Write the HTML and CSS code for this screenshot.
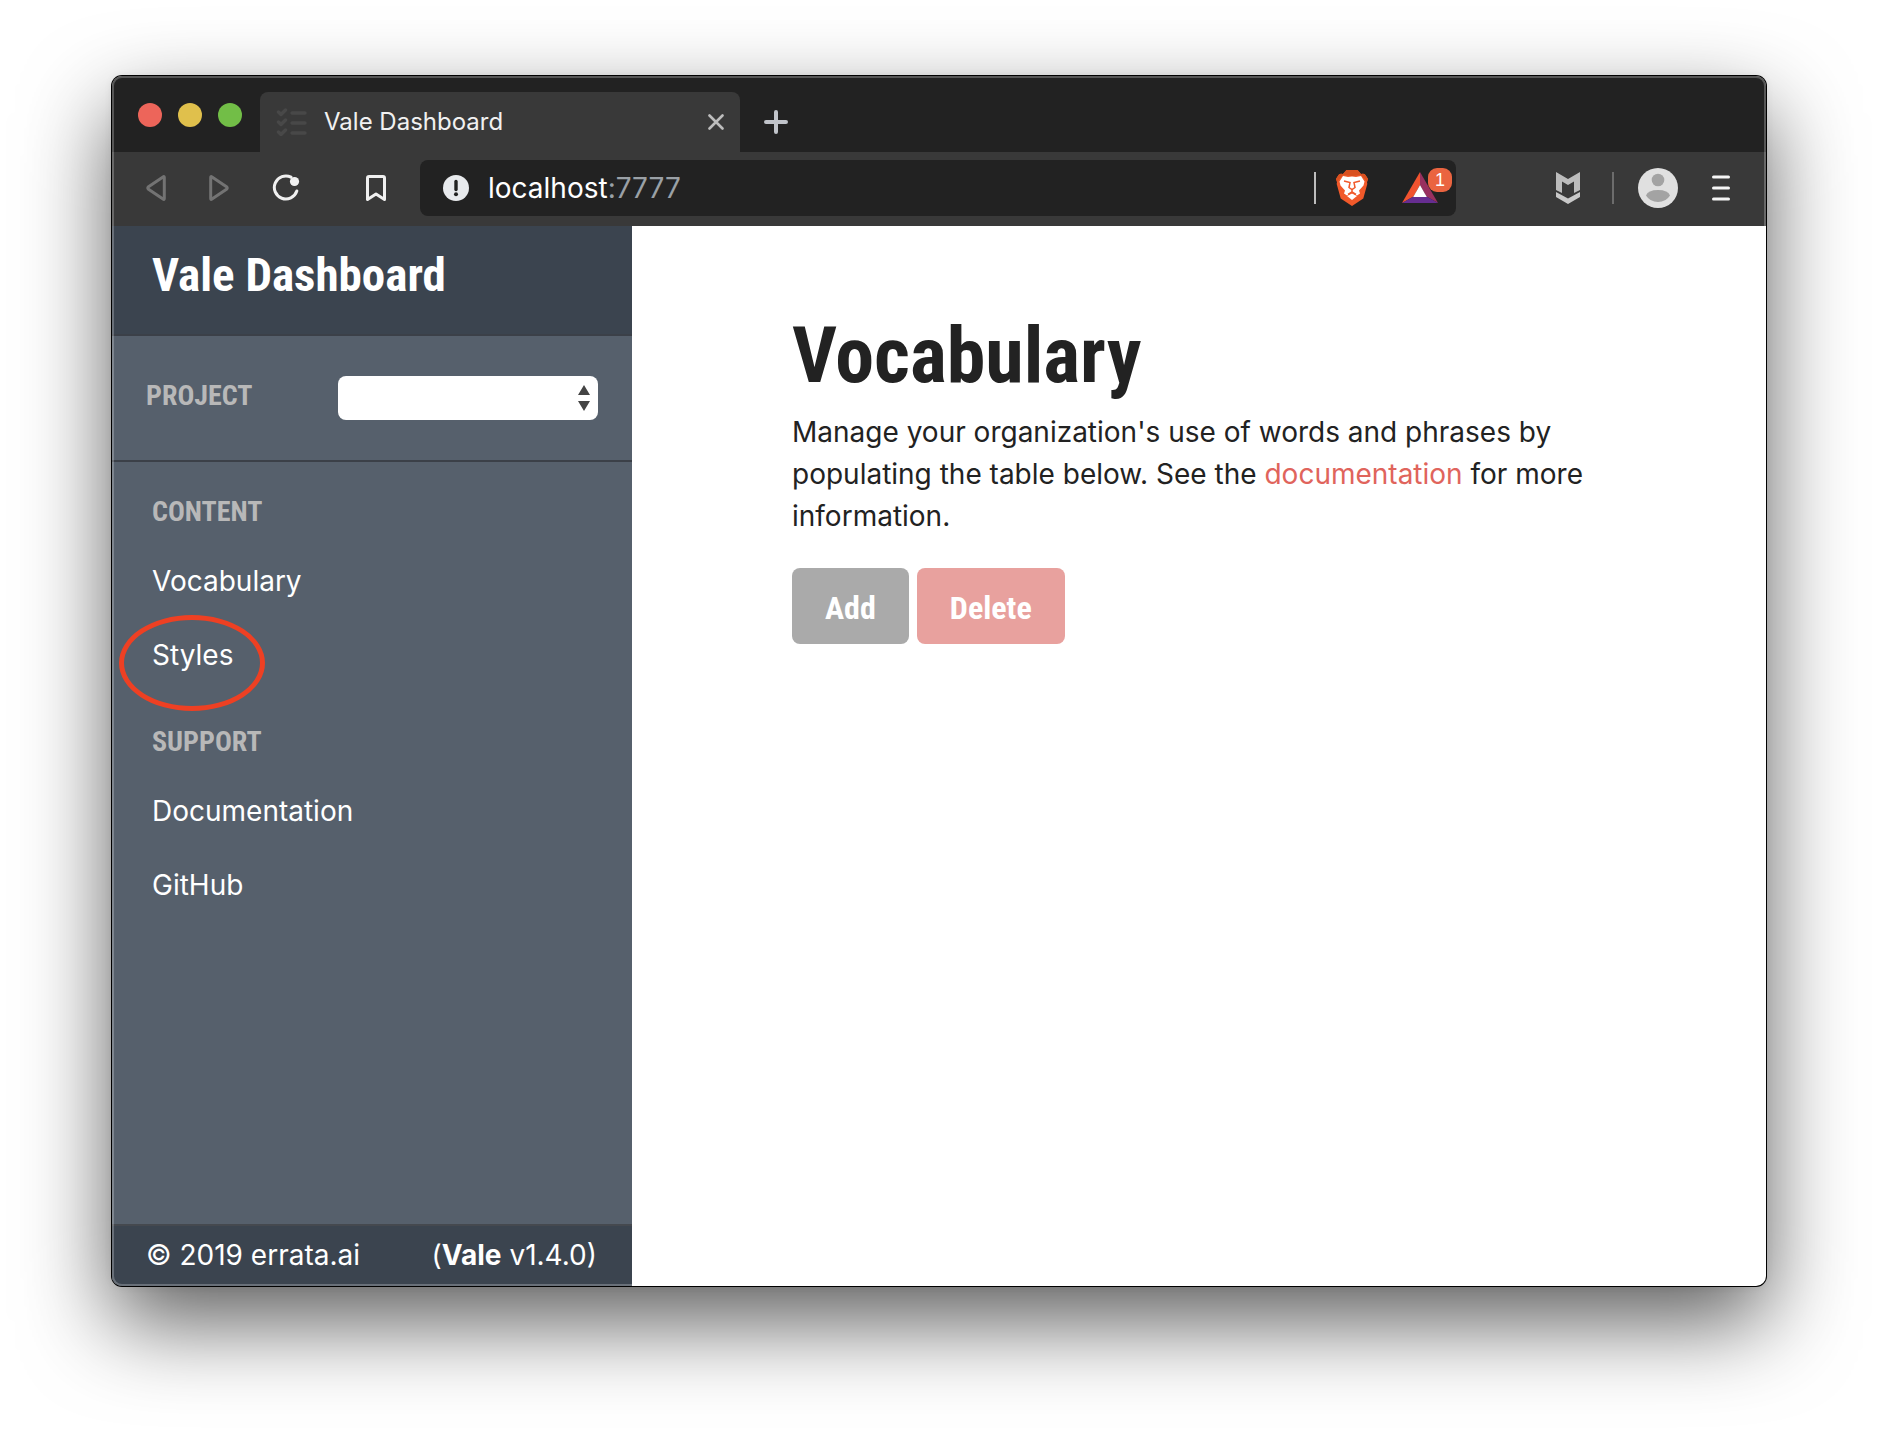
FILE: index.html
```html
<!DOCTYPE html>
<html lang="en">
<head>
<meta charset="utf-8">
<title>Vale Dashboard</title>
<link rel="stylesheet" href="styles.css">
</head>
<body>
<div class="window">
  <div class="tab-strip">
    <div class="lights">
      <span class="light light-close"></span>
      <span class="light light-minimize"></span>
      <span class="light light-zoom"></span>
    </div>
    <div class="tab">
      <svg class="favicon" width="32" height="28" viewBox="0 0 32 28" fill="none" stroke="#484848" stroke-width="3.400" stroke-linecap="round" stroke-linejoin="round">
        <path d="M2.500 4l2.500 2.500 4.500-4.500M2.500 14l2.500 2.500 4.500-4.500M2.500 24l2.500 2.500 4.500-4.500M16 5h13M16 15h13M16 25h13"/>
      </svg>
      <span class="tab-title">Vale Dashboard</span>
      <button class="icon-button" aria-label="Close tab">
        <svg width="16" height="16" viewBox="0 0 16 16" fill="none" stroke="#bdbdbd" stroke-width="2.600" stroke-linecap="round"><path d="M1.500 1.500l13 13M14.500 1.500l-13 13"/></svg>
      </button>
    </div>
    <button class="icon-button new-tab" aria-label="New tab">
      <svg width="24" height="24" viewBox="0 0 24 24" fill="none" stroke="#c1c4ca" stroke-width="4" stroke-linecap="round"><path d="M12 2v20M2 12h20"/></svg>
    </button>
  </div>

  <div class="toolbar">
    <div class="nav-buttons">
      <button class="icon-button" aria-label="Back">
        <svg width="20" height="26" viewBox="0 0 20 26" fill="none" stroke="#737373" stroke-width="3" stroke-linejoin="round"><path d="M18.300 2.500v21q0 1.500-1.300.6L2.500 14.300q-1.500-1.300 0-2.600L17 1.900q1.300-.9 1.300.6z"/></svg>
      </button>
      <button class="icon-button" aria-label="Forward">
        <svg width="20" height="26" viewBox="0 0 20 26" fill="none" stroke="#737373" stroke-width="3" stroke-linejoin="round"><path d="M1.700 2.500v21q0 1.500 1.300.6l14.500-9.800q1.500-1.300 0-2.600L3 1.900q-1.300-.9-1.300.6z"/></svg>
      </button>
      <button class="icon-button" aria-label="Reload">
        <svg width="28" height="28" viewBox="0 0 28 28" fill="none" stroke="#f0f0f0" stroke-width="3" stroke-linecap="round"><path d="M19 3.200A11.500 11.500 0 1 0 24.800 17"/><circle cx="22.500" cy="7.500" r="4.600" fill="#f0f0f0" stroke="none"/></svg>
      </button>
    </div>
    <button class="icon-button bookmark" aria-label="Bookmark">
      <svg width="20" height="26" viewBox="0 0 20 26" fill="none" stroke="#f0f0f0" stroke-width="3" stroke-linejoin="round"><path d="M1.500 3q0-1.500 1.500-1.500h14q1.500 0 1.500 1.500v21.500L10 19l-8.500 5.500z"/></svg>
    </button>
    <div class="address-bar">
      <svg width="26" height="26" viewBox="0 0 26 26"><circle cx="13" cy="13" r="13" fill="#e8eaed"/><path d="M13 6.500v8" stroke="#222" stroke-width="3.400" stroke-linecap="round"/><circle cx="13" cy="19.300" r="2" fill="#222"/></svg>
      <span class="url">localhost<span class="port">:7777</span></span>
      <span class="divider divider-light"></span>
      <button class="icon-button brave" aria-label="Brave Shields">
        <svg width="32" height="36" viewBox="0 0 32 36">
          <path d="M10.500 0h11l3.500 4q3-1 4.500 1l2.500 4-1 3 .3 2-4 14.500L16 36 4.700 28.500.7 14 1 12 0 9l2.500-4Q4 3 7 4z" fill="#f1592a"/>
          <path d="M10.500 0h11l3.500 4q3-1 4.500 1l2.500 4-1 3L25 5 16 6 7 5 1 12 0 9l2.500-4Q4 3 7 4z" fill="#d9501f"/>
          <path d="M7 6l5 1 4-.5 4 .5 5-1 3.500 5.500-1 4-4.500 5 1 3-3 2-1.500-1-3.500-2.500-3.500 2.500-1.500 1-3-2 1-3-4.500-5-1-4z" fill="#fff"/>
          <path d="M16 23.500l5 2.500-5 4-5-4z" fill="#fff"/>
          <path d="M8 11l6 1.500-1 5 3 2 3-2-1-5 6-1.500M16 19.500V22l-4 2.500M16 22l4 2.500" fill="none" stroke="#f1592a" stroke-width="1.500"/>
        </svg>
      </button>
      <button class="icon-button rewards" aria-label="Brave Rewards, 1 notification">
        <svg width="36" height="32" viewBox="0 0 36 32">
          <path d="M18 0v13l-6.500 11.500L0 31z" fill="#f1532f"/>
          <path d="M18 0l18 31-11.500-6.500L18 13z" fill="#98305f"/>
          <path d="M0 31l11.500-6.500h13L36 31z" fill="#662d91"/>
          <path d="M18 13l6.800 12H11.200z" fill="#fff"/>
        </svg>
        <span class="badge">1</span>
      </button>
    </div>
    <div class="extensions">
      <button class="icon-button" aria-label="McAfee WebAdvisor">
        <svg width="24" height="32" viewBox="0 0 24 32"><path d="M0 0l12 7 12-7v18l-6 3V9.500L12 13 6 9.500V21l-6-3z" fill="#bcbcbc"/><path d="M0 20l12 6.500L24 20v5l-12 7-12-7z" fill="#c8c8c8"/></svg>
      </button>
      <span class="divider"></span>
      <button class="icon-button" aria-label="Profile">
        <svg width="40" height="40" viewBox="0 0 40 40"><circle cx="20" cy="20" r="20" fill="#e0e0e0"/><circle cx="20" cy="12" r="6.300" fill="#a3a3a3"/><path d="M8 27.500q2-5.500 12-5.500t12 5.500Q28 34 20 34T8 27.500z" fill="#a3a3a3"/></svg>
      </button>
      <button class="icon-button menu" aria-label="Menu">
        <svg width="18" height="26" viewBox="0 0 18 26" stroke="#f5f5f5" stroke-width="3" stroke-linecap="round"><path d="M1.500 2h15M1.500 13h15M1.500 24h15"/></svg>
      </button>
    </div>
  </div>

  <div class="page">
    <aside class="sidebar">
      <header class="brand">Vale Dashboard</header>
      <div class="project">
        <label class="label" for="project">PROJECT</label>
        <div class="select-wrap">
          <select class="select" id="project"><option></option></select>
          <svg class="select-arrows" width="12" height="26" viewBox="0 0 12 26" fill="#444"><path d="M6 0l6 10H0zM0 16h12L6 26z"/></svg>
        </div>
      </div>
      <nav class="menu-groups">
        <section class="group">
          <h2 class="label">CONTENT</h2>
          <a class="link" href="#vocabulary">Vocabulary</a>
          <a class="link circled" href="#styles">Styles</a>
        </section>
        <section class="group">
          <h2 class="label">SUPPORT</h2>
          <a class="link" href="#docs">Documentation</a>
          <a class="link" href="#github">GitHub</a>
        </section>
      </nav>
      <footer class="footer">
        <span>© 2019 errata.ai</span>
        <span>(<strong>Vale</strong> v1.4.0)</span>
      </footer>
    </aside>
    <main class="content">
      <h1 class="title">Vocabulary</h1>
      <p class="intro">Manage your organization's use of words and phrases by populating the table below. See the <a class="doc-link" href="#docs">documentation</a> for more information.</p>
      <div class="actions">
        <button class="button button-add">Add</button>
        <button class="button button-delete">Delete</button>
      </div>
    </main>
  </div>
</div>
</body>
</html>
```
FILE: styles.css
```css
*,
*::before,
*::after {
  box-sizing: border-box;
}

body {
  margin: 0;
  min-height: 100vh;
  padding: 76px 112px 148px;
  display: flex;
  background: #fff;
  color: #222;
  font-family: Inter, "Liberation Sans", sans-serif;
  font-size: 28px;
  line-height: 42px;
}

.window {
  position: relative;
  flex: 1;
  min-width: 0;
  display: flex;
  flex-direction: column;
  overflow: hidden;
  border-radius: 10px;
  background: #fff;
  box-shadow: 0 0 0 1px #000, 0 0 8px rgba(0, 0, 0, 0.08), 0 36px 88px rgba(0, 0, 0, 0.64);
}

/* light rim along the window edge */
.window::after {
  content: "";
  position: absolute;
  inset: 0;
  border: 2px solid rgba(255, 255, 255, 0.24);
  border-radius: 10px;
  pointer-events: none;
}

.icon-button {
  display: flex;
  padding: 0;
  border: 0;
  background: none;
}

/* Tab strip */
.tab-strip {
  display: flex;
  align-items: flex-end;
  height: 76px;
  background: #222;
}

.lights {
  display: flex;
  gap: 16px;
  width: 148px;
  padding-left: 26px;
  padding-bottom: 25px;
}

.light {
  width: 24px;
  height: 24px;
  border-radius: 50%;
}

.light-close { background: #ed655a; }
.light-minimize { background: #e0c04c; }
.light-zoom { background: #72be47; }

.tab {
  display: flex;
  align-items: center;
  width: 480px;
  height: 60px;
  padding: 0 16px;
  border-radius: 8px 8px 0 0;
  background: #393939;
}

.tab-title {
  flex: 1;
  padding-left: 16px;
  color: #f1f1f1;
  font-size: 24px;
}

.new-tab {
  padding: 0 24px 18px;
}

/* Toolbar */
.toolbar {
  display: flex;
  align-items: center;
  height: 74px;
  padding: 0 36px 2px 34px;
  background: #393939;
}

.nav-buttons {
  display: flex;
  align-items: center;
  gap: 43px;
}

.bookmark {
  margin: 0 34px 0 66px;
}

.address-bar {
  flex: 1;
  display: flex;
  align-items: center;
  height: 56px;
  padding: 0 18px 0 23px;
  border-radius: 8px;
  background: #222;
}

.url {
  flex: 1;
  padding-left: 19px;
  color: #fff;
}

.port {
  color: #9aa0a6;
}

.divider {
  width: 2px;
  height: 32px;
  background: #6c6c6c;
}

.divider-light {
  background: #bdbdbd;
}

.brave {
  margin: 0 34px 0 20px;
}

.rewards {
  position: relative;
}

.badge {
  position: absolute;
  top: -4px;
  right: -14px;
  width: 24px;
  height: 24px;
  border-radius: 9px;
  background: #ea6440;
  color: #fff;
  font-size: 18px;
  line-height: 24px;
  text-align: center;
}

.extensions {
  display: flex;
  align-items: center;
  gap: 24px;
  padding-left: 100px;
}

.extensions .divider {
  margin-left: 8px;
}

.menu {
  margin-left: 10px;
}

/* Page */
.page {
  flex: 1;
  display: flex;
}

.sidebar {
  flex: 0 0 520px;
  display: flex;
  flex-direction: column;
  background: #56606c;
  color: #fff;
}

.brand,
.label,
.title,
.button {
  font-family: "Liberation Sans Narrow", "Roboto Condensed", "Open Sans Condensed", sans-serif;
  font-weight: 700;
}

.brand {
  height: 110px;
  padding: 19px 40px;
  border-bottom: 2px solid #3b4048;
  background: #3b444f;
  font-size: 47px;
  line-height: 60px;
}

.project {
  display: flex;
  align-items: center;
  justify-content: space-between;
  height: 126px;
  padding: 0 34px;
  border-bottom: 2px solid #3b4048;
}

.label {
  margin: 0;
  color: #b8b8b8;
  font-size: 28px;
  line-height: 42px;
}

.project .label {
  padding-bottom: 4px;
}

.select-wrap {
  position: relative;
  display: flex;
}

.select {
  width: 260px;
  height: 44px;
  border: 0;
  border-radius: 8px;
  appearance: none;
  background: #fff;
  font-size: 28px;
}

.select-arrows {
  position: absolute;
  top: 9px;
  right: 8px;
  pointer-events: none;
}

.menu-groups {
  flex: 1;
  padding: 29px 40px;
}

.group {
  display: flex;
  flex-direction: column;
  align-items: flex-start;
  gap: 32px;
  margin-bottom: 45px;
}

.group .label {
  margin-bottom: -5px;
}

.link {
  position: relative;
  color: #fff;
  text-decoration: none;
}

/* hand-drawn highlight around a menu entry */
.circled::after {
  content: "";
  position: absolute;
  top: -19px;
  left: -33px;
  width: 146px;
  height: 96px;
  border: 5px solid #ee4023;
  border-radius: 50%;
}

.footer {
  display: flex;
  justify-content: space-between;
  height: 62px;
  padding: 8px 35px 8px 34px;
  border-top: 2px solid #45494f;
  background: #3b444f;
}

.content {
  flex: 1;
  min-width: 0;
  padding: 80px 160px;
}

.title {
  margin: 0 0 5px;
  font-size: 78px;
  line-height: 100px;
}

.intro {
  margin: 0 0 31px;
}

.doc-link {
  color: #e0645c;
  text-decoration: none;
}

.actions {
  display: flex;
  gap: 8px;
}

.button {
  height: 76px;
  padding: 4px 33px 0;
  border: 0;
  border-radius: 8px;
  color: #fff;
  font-size: 32px;
}

.button-add { background: #aaa; }
.button-delete { background: #e8a19e; }
```
